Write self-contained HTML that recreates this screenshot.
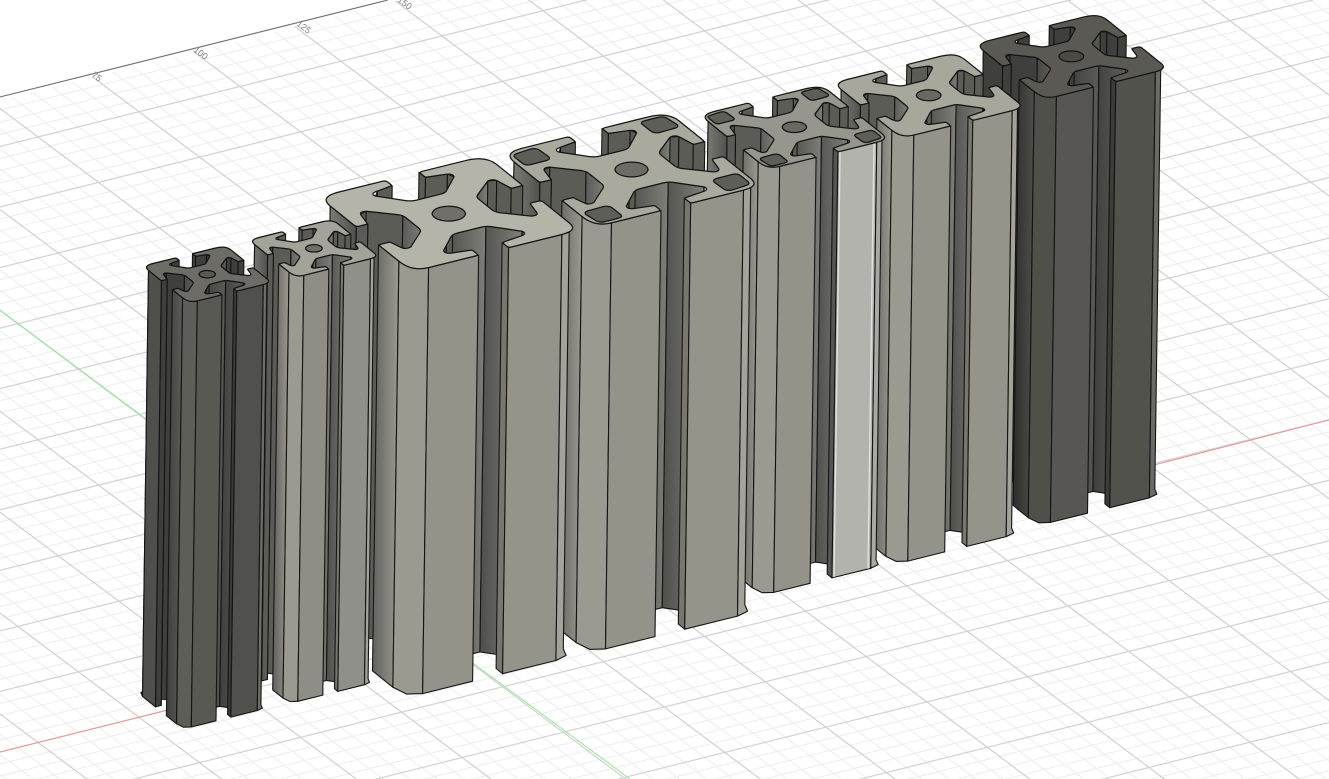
<!DOCTYPE html>
<html lang="en"><head><meta charset="utf-8"><title>Extrusion profiles</title>
<style>
html,body{margin:0;padding:0;background:#fff;width:1329px;height:779px;overflow:hidden}
svg{display:block}
#c polygon{stroke:#141414;stroke-width:1.1;stroke-linejoin:round}
#c .t{stroke:#141414;stroke-width:1.25;stroke-linejoin:round;vector-effect:non-scaling-stroke}
text{font-family:"Liberation Sans",sans-serif;font-size:9px;fill:#808080}
</style></head><body>
<svg width="1329" height="779" viewBox="0 0 1329 779">
<defs>
<pattern id="grid" width="100" height="100" patternUnits="userSpaceOnUse" patternTransform="matrix(1.01 -.2525 .606 .454 361.2 631.4)">
<path d="M0 10H100M0 30H100M0 70H100M0 90H100" stroke="#ededed" stroke-width="1.7" fill="none"/>
<path d="M10 0V100M30 0V100M70 0V100M90 0V100" stroke="#ededed" stroke-width="1.3" fill="none"/>
<path d="M0 50H100" stroke="#d0d0d0" stroke-width="2" fill="none"/>
<path d="M50 0V100" stroke="#d0d0d0" stroke-width="1.5" fill="none"/>
</pattern>
<linearGradient id="g1"><stop offset="0" stop-color="#62625e"/><stop offset="1" stop-color="#9a9a90"/></linearGradient>
<linearGradient id="g2"><stop offset="0" stop-color="#4e4e4b"/><stop offset="1" stop-color="#7f7f79"/></linearGradient>
<linearGradient id="g3"><stop offset="0" stop-color="#85857f"/><stop offset="1" stop-color="#50504d"/></linearGradient>
<linearGradient id="g4"><stop offset="0" stop-color="#2e2e2c"/><stop offset="1" stop-color="#4e4e4a"/></linearGradient>
<linearGradient id="g5"><stop offset="0" stop-color="#3e3e3b"/><stop offset="1" stop-color="#5c5c57"/></linearGradient>
</defs>
<rect width="1329" height="779" fill="#fff"/>
<rect width="1329" height="779" fill="url(#grid)"/>
<polygon points="0,0 400,0 0,100" fill="#fff"/>
<path d="M0 97L388 0" stroke="#777" stroke-width="1.1"/>
<path d="M0 752L180 707M1150 466L1329 420" stroke="#ec8f8f" stroke-width="1"/>
<path d="M0 310L150 422M470 661L630 779" stroke="#93e693" stroke-width="1"/>
<text transform="translate(91 76) rotate(37)">75</text>
<text transform="translate(193 51) rotate(37)">100</text>
<text transform="translate(296 25) rotate(37)">125</text>
<text transform="translate(397 1) rotate(37)">150</text>
<g id="c"></g>
</svg>
<script>
(function(){
var P="M12 0 L38 0 Q40 0 40 2 L40 6 Q40 7 38.5 7.2 L30 8.8 Q25 9.5 26.5 13.5 L38 26 Q40 28 43 28 L57 28 Q60 28 62 26 L73.5 13.5 Q75 9.5 70 8.8 L61.5 7.2 Q60 7 60 6 L60 2 Q60 0 62 0 L88 0 Q100 0 100 12 "+
"L100 38 Q100 40 98 40 L94 40 Q93 40 92.8 38.5 L91.2 30 Q90.5 25 86.5 26.5 L74 38 Q72 40 72 43 L72 57 Q72 60 74 62 L86.5 73.5 Q90.5 75 91.2 70 L92.8 61.5 Q93 60 94 60 L98 60 Q100 60 100 62 L100 90 Q100 100 90 100 "+
"L60 100 Q58 100 58 98 L58 94 Q58 93 59.5 92.8 L70 91.2 Q75 90.5 73.5 86.5 L62 74 Q60 72 57 72 L43 72 Q40 72 38 74 L26.5 86.5 Q25 90.5 30 91.2 L38.5 92.8 Q40 93 40 94 L40 98 Q40 100 38 100 L10 100 Q0 100 0 86 "+
"L0 66 Q0 64 2 64 L6 64 Q7 64 7.2 65.5 L8.8 72 Q9.5 76 13.5 74.5 L26 62 Q28 60 28 57 L28 43 Q28 40 26 38 L13.5 26.5 Q9.5 25 8.8 30 L7.2 38.5 Q7 40 6 40 L2 40 Q0 40 0 38 L0 12 Q0 0 12 0 Z";
var H="M7 4 L15 3 Q18 3 18.5 6 L19 15 Q19 19 15 19 L6 19 Q3 19 3 15 L3 8 Q3 4 7 4Z";
var G=function(i){return "url(#g"+i+")"};
var L={w:"#5c5c57",fl:G(2),lip:"#77776f",f1:G(1),c1:"#9a9a90",f2:"#93938a",f3:"#94948b",c2:"#a3a39a",rear:G(3),hole:"#6f6e68"};
function X(o,b){var r={};for(var k in b)r[k]=b[k];for(k in o)r[k]=o[k];return r}
var cols=[
 X({L:[975,44],s:.75,w:"#3f3f3c",fl:G(5),f1:G(4),c1:"#50504b",f2:"#575652",lip:"#3c3c39",f3:"#52524d",c2:"#6a6a66",rear:"#3f3f3c",top:"#5a5953",hole:"#4a4944"},L),
 X({L:[833,83],s:.745,top:"#a8a79c",hole:"#6a6862"},L),
 X({L:[700,115],s:.735,top:"#97968c",lip:"#555",f3:"#b3b3ad",c2:"#a9a9a3",hollow:1,stripe:1,hole:"#6a6862"},L),
 X({L:[503,153],s:1,top:"#aaa99e",hollow:1,hole:"#6c6b65"},L),
 X({L:[319,197],s:1.01,top:"#b5b4a8",hole:"#706f69"},L),
 X({L:[249,240],s:.505,top:"#a4a39a",f2:"#8e8e86",f3:"#90908a",hole:"#6f6e68"},L),
 X({L:[143,266],s:.5,w:"#3f3f3c",fl:G(5),f1:G(5),c1:"#5e5e59",f2:"#595954",lip:"#3a3a38",f3:"#50504c",c2:"#6d6d69",rear:"#4f4f4c",top:"#6d6c66",hole:"#595852"},L)
];
var h="",EX=-6,EY=426;
cols.forEach(function(c){
 var s=c.s,e1=[165*s,-41*s],e2=[92*s,74*s],O=c.L;
 function pt(p){return [O[0]+e1[0]*p[0]/100+e2[0]*p[1]/100,O[1]+e1[1]*p[0]/100+e2[1]*p[1]/100]}
 function S(pts,f){
  var t=pts.map(pt),b=t.map(function(q){return [q[0]+EX,q[1]+EY]}).reverse();
  h+='<polygon fill="'+f+'" points="'+t.concat(b).map(function(q){return q[0].toFixed(1)+","+q[1].toFixed(1)}).join(" ")+'"/>';
 }
 /* rear slot walls, including the pocket under the rear-left lip */
 S([[26.5,13.5],[30,8.8]],c.w);S([[30,8.8],[40,7]],c.w);
 S([[60,0],[60,7]],c.w);S([[60,7],[72,9]],c.w);S([[72,9],[73.5,13.5]],c.w);
 /* right slot walls */
 S([[72,40],[86.5,26.5]],c.fl);S([[86.5,26.5],[91,28]],c.w);S([[91,28],[93,40]],c.w);S([[93,40],[100,40]],c.w);
 /* left slot */
 S([[13.5,26.5],[28,40]],c.w);S([[28,40],[28,60]],c.fl);
 S([[9,28],[13.5,26.5]],c.w);S([[7,40],[9,28]],c.w);S([[0,40],[7,40]],c.w);
 /* rear outer left */
 S([[12,0],[3,3],[0,12]],c.rear);S([[0,12],[0,40]],c.rear);
 /* front slot */
 S([[40,72],[60,72]],c.fl);S([[60,72],[73.5,86.5]],c.fl);
 /* front faces */
 S([[0,64],[0,86]],c.f1);
 S([[0,86],[2.5,96.5],[10,100]],c.c1);
 S([[10,100],[40,100]],c.f2);
 S([[58,93],[58,100]],c.lip);
 S([[58,100],[90,100]],c.f3);
 S([[90,100],[97.5,97.5],[100,90]],c.c2);
 if(c.stripe){
  var a=pt([60,99.5]),b=pt([88,99.5]);
  h+='<path d="M'+a[0]+' '+a[1]+'L'+(a[0]+EX)+' '+(a[1]+EY)+'M'+b[0]+' '+b[1]+'L'+(b[0]+EX)+' '+(b[1]+EY)+'" stroke="#e0e0dc" stroke-width="1.4" fill="none"/>';
 }
 var M="matrix("+[e1[0]/100,e1[1]/100,e2[0]/100,e2[1]/100,O[0],O[1]].join(" ")+")";
 h+='<path class="t" transform="'+M+'" fill="'+c.top+'" d="'+P+'"/>';
 if(c.hollow){[0,90,180,270].forEach(function(k){
  h+='<path class="t" transform="'+M+' rotate('+k+' 50 50)" fill="#5e5e59" d="'+H+'"/>';
 });}
 h+='<circle class="t" transform="'+M+'" cx="50" cy="50" r="8.7" fill="'+c.hole+'"/>';
});
document.getElementById("c").innerHTML=h;
})();
</script>
</body></html>
